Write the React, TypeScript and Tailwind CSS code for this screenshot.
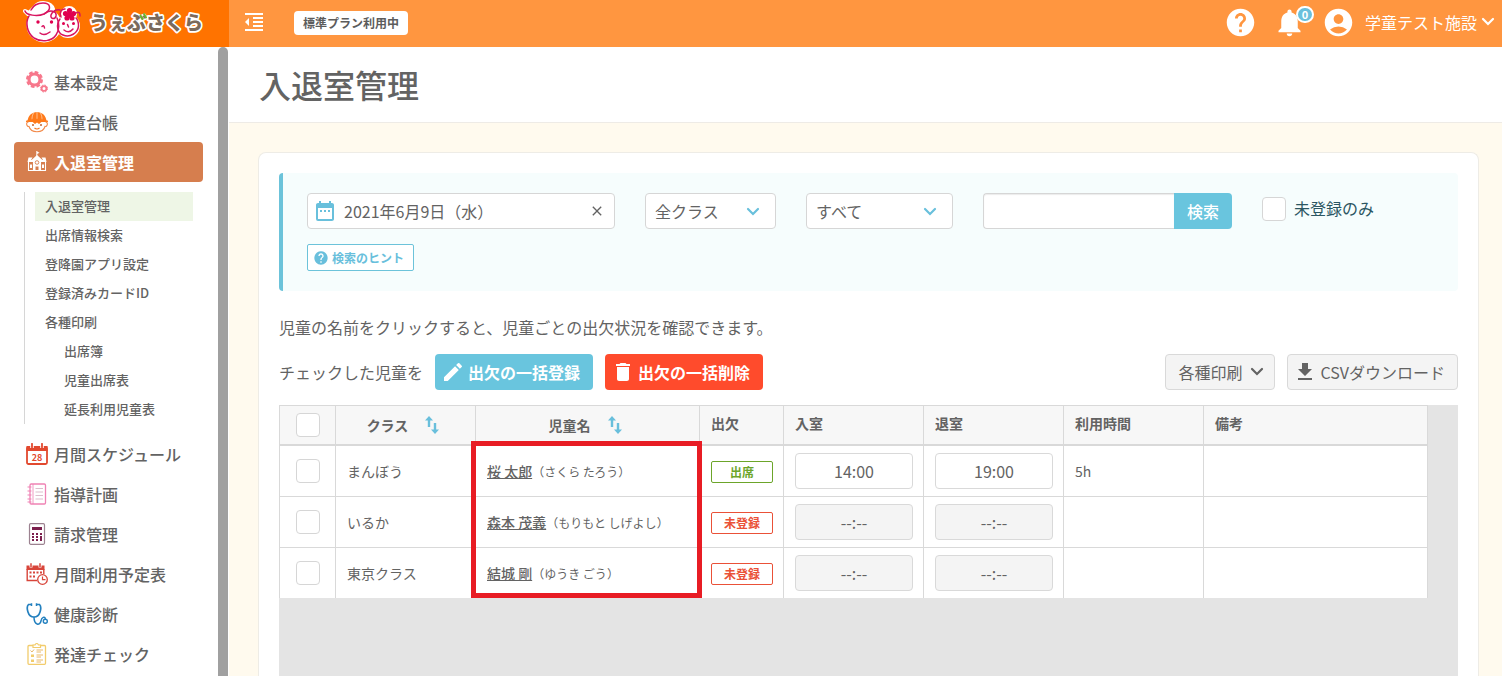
import React from "react";
import {
  MdAccountCircle,
  MdClose,
  MdDateRange,
  MdDelete,
  MdEdit,
  MdFileDownload,
  MdFormatIndentDecrease,
  MdHelp,
  MdNotifications,
} from "react-icons/md";

function Logo() {
  return (
    <svg width="186" height="46" viewBox="0 0 186 46" role="img" aria-label="うぇぶさくら">
      <g fill="#fff" stroke="#fff" strokeWidth="4" strokeLinejoin="round">
        <circle cx="21" cy="25" r="15.5" />
        <circle cx="45" cy="26" r="10" />
        <path d="M2 11 C12 16 24 18 30 9 C28 2 16 1 12 7 L5 14 Z" />
        <circle cx="46" cy="14" r="6" />
      </g>
      <g fill="none" stroke="#d8145f" strokeWidth="1.500" strokeLinecap="round">
        <path d="M6 16 C2 23 4 33 11 38 C19 43 29 41 33 35 C36.500 30 36.500 23 34 18" />
        <path d="M2 11 C3 15 14 17 21 14 C29 10 28 3 20 3 C14 3 10 6 8 10" />
        <path d="M21 14 C27 9 34 11 33 16 C32 20 27 19 28 15 C29 12 33 9 37 10" />
        <path d="M37 19 C33 24 34 33 40 35 C47 38 55 33 55.500 26 C55.500 23 55 20 53 18" />
        <path d="M38 17 C36 13 38 9 42 9" />
        <path d="M53 13 C56 11 57 13 57 16" />
        <path d="M17 33 Q21 36.500 27 32" />
        <path d="M41 30 Q46 34 50 29" />
        <path d="M19 26.500 Q21 24.500 21.500 28" />
        <path d="M44.500 24.500 L45.500 27" />
      </g>
      <g fill="#e0004f">
        <circle cx="15" cy="22" r="1.700" />
        <circle cx="28.500" cy="22" r="1.700" />
        <circle cx="40.500" cy="23.500" r="1.500" />
        <circle cx="50.500" cy="23.500" r="1.500" />
        <circle cx="46.500" cy="10.500" r="2.600" />
        <circle cx="50.500" cy="13.500" r="2.600" />
        <circle cx="49" cy="18" r="2.600" />
        <circle cx="44" cy="18" r="2.600" />
        <circle cx="42.500" cy="13.500" r="2.600" />
        <circle cx="46.500" cy="15" r="3" />
      </g>
      <text
        x="66"
        y="30"
        fontSize="19"
        fontWeight="900"
        fill="#7b6a5c"
        stroke="#fff"
        strokeWidth="3.500"
        strokeLinejoin="round"
        paintOrder="stroke"
      >
        うぇぶさくら
      </text>
      <path
        d="M117.500 15.500 L119.500 19 M121 14 L123 17.500"
        stroke="#6cb32e"
        strokeWidth="2"
        strokeLinecap="round"
      />
    </svg>
  );
}

const iconProps = { width: 22, height: 22, viewBox: "0 0 22 22", fill: "none", "aria-hidden": true } as const;

function GearsIcon() {
  return (
    <svg {...iconProps}>
      <circle cx="8.500" cy="8.500" r="5.500" stroke="#f7788c" strokeWidth="3.200" />
      <circle cx="8.500" cy="8.500" r="7.300" stroke="#f7788c" strokeWidth="2.400" strokeDasharray="3.600 2.130" />
      <circle cx="18" cy="17.500" r="2.400" stroke="#f7788c" strokeWidth="1.800" />
      <circle cx="18" cy="17.500" r="3.500" stroke="#f7788c" strokeWidth="1" strokeDasharray="1.600 1.150" />
    </svg>
  );
}

function ChildIcon() {
  return (
    <svg {...iconProps}>
      <path d="M1.500 11 C1.500 -2.500 20.500 -2.500 20.500 11 Z" fill="#ff7a1a" />
      <path d="M11 1 V8 M7.500 2 C6 5 6 7 6 9 M14.500 2 C16 5 16 7 16 9" stroke="#ffd0a8" strokeWidth=".8" />
      <path d="M0 10.500 Q11 6.500 22 10.500" stroke="#ff7a1a" strokeWidth="1.600" />
      <path
        d="M2.500 11 C-.5 11 .5 16 3 15.500 C5 22.500 17 22.500 19 15.500 C21.500 16 22.500 11 19.500 11"
        stroke="#f28a4a"
        strokeWidth="1.100"
      />
      <path d="M6 10.500 H16 L13 13 L11 11.500 L9 13 Z" fill="#ff7a1a" />
      <circle cx="7" cy="14" r="1" fill="#c2622c" />
      <circle cx="15" cy="14" r="1" fill="#c2622c" />
      <path d="M8.500 17 Q11 19 13.500 17" stroke="#f2701a" strokeWidth="1.200" />
    </svg>
  );
}

function SchoolIcon() {
  return (
    <svg {...iconProps}>
      <path d="M10.800 0 V6" stroke="#fff" strokeWidth="1" />
      <path d="M11 .5 L13.500 1.700 L11 3 Z" fill="#fff" />
      <path d="M11 4 L17 9.500 H5 Z M2.500 6.500 H6.500 L5 9 H17 L15.500 6.500 H19.500 L20.500 11 H1.500 Z" fill="#fff" />
      <path d="M2.500 11 V19.500 H19.500 V11 M7.500 11 V19.500 M14.500 11 V19.500" stroke="#fff" strokeWidth="1.100" />
      <path d="M7.500 9 H14.500 V19.500 H12.500 V15.500 H9.500 V19.500 H7.500 Z" fill="#fff" />
      <circle cx="11" cy="11.500" r="1.800" stroke="#d67e4e" strokeWidth=".9" />
      <path d="M4 13.500 H6 V17 H4 Z M16 13.500 H18 V17 H16 Z" fill="#fff" />
    </svg>
  );
}

function CalendarIcon() {
  return (
    <svg {...iconProps}>
      <rect x="1" y="4" width="20" height="17" rx="1.500" stroke="#e2492f" strokeWidth="1.800" />
      <path d="M.5 3 H21.500 V8 H.5 Z" fill="#e2492f" />
      <path d="M6 0 V5 M16 0 V5" stroke="#fff" strokeWidth="3.600" />
      <path d="M6 .8 V4.500 M16 .8 V4.500" stroke="#e2492f" strokeWidth="1.800" strokeLinecap="round" />
      <text x="11" y="17.500" textAnchor="middle" fontSize="9" fontWeight="700" fill="#e2492f">
        28
      </text>
    </svg>
  );
}

function NotebookIcon() {
  return (
    <svg {...iconProps}>
      <rect x="4" y="1" width="15.500" height="20" rx="1.200" stroke="#ef82b4" strokeWidth="1.300" />
      <path d="M7 1 V21" stroke="#ef82b4" strokeWidth=".8" />
      <path
        d="M1.500 4 H5.500 M1.500 8 H5.500 M1.500 12 H5.500 M1.500 16 H5.500 M1.500 19 H5.500"
        stroke="#ef82b4"
        strokeWidth="1.200"
      />
      <path d="M9.500 5.500 H17 M9.500 9 H17 M9.500 12.500 H17 M9.500 16 H17" stroke="#d9b5c6" strokeWidth=".9" />
    </svg>
  );
}

function CalculatorIcon() {
  return (
    <svg {...iconProps}>
      <rect x="3.500" y=".7" width="15" height="20.600" rx="1.200" stroke="#9c8290" strokeWidth="1.200" />
      <path d="M6 4 H16 V7 H6 Z" fill="#7c1f4d" />
      <path
        d="M6 10 H8 V12 H6 Z M10 10 H12 V12 H10 Z M14 10 H16 V12 H14 Z M6 13 H8 V15 H6 Z M10 13 H12 V15 H10 Z M14 13 H16 V18 H14 Z M6 16 H8 V18 H6 Z M10 16 H12 V18 H10 Z"
        fill="#7c1f4d"
      />
    </svg>
  );
}

function CalendarClockIcon() {
  return (
    <svg {...iconProps}>
      <path d="M.5 2.500 H18.500 V7 H.5 Z" fill="#d8453a" />
      <path d="M1.200 6 V17.500 H11 M17.800 6 V11" stroke="#d8453a" strokeWidth="1.400" />
      <path d="M5 0 V4.500 M14 0 V4.500" stroke="#fff" strokeWidth="3" />
      <path d="M5 .3 V4 M14 .3 V4" stroke="#d8453a" strokeWidth="1.500" />
      <path
        d="M3.500 8.500 H5.500 V10.500 H3.500 Z M7 8.500 H9 V10.500 H7 Z M10.500 8.500 H12.500 V10.500 H10.500 Z M14 8.500 H16 V10.500 H14 Z M3.500 12.500 H5.500 V14.500 H3.500 Z M7 12.500 H9 V14.500 H7 Z"
        fill="#d8453a"
      />
      <circle cx="16.500" cy="16.500" r="4.800" fill="#fff" stroke="#d8453a" strokeWidth="1.300" />
      <path d="M16.500 13.500 V16.700 H19.500" stroke="#d8453a" strokeWidth="1.200" />
    </svg>
  );
}

function StethoscopeIcon() {
  return (
    <svg {...iconProps}>
      <path d="M5 1.500 H2.500 C0 4 1.500 14 8 14 C14.500 14 16 4 13.500 1.500 H11" stroke="#2380bf" strokeWidth="1.700" />
      <path d="M5.500 .3 V3 M10.500 .3 V3" stroke="#2380bf" strokeWidth="1.500" />
      <path d="M8 14 C8 22.500 14 23 15 18 C15.500 14 19 13 19.300 16" stroke="#2380bf" strokeWidth="1.500" />
      <circle cx="19.300" cy="18.300" r="2" stroke="#2380bf" strokeWidth="1.400" />
    </svg>
  );
}

function ChecklistIcon() {
  return (
    <svg {...iconProps}>
      <rect x="2" y="2.500" width="17.500" height="18.800" rx="1" stroke="#f2cc6c" strokeWidth="1.300" />
      <path d="M7 4.500 V2 H9 Q10.700 -1 12.500 2 H14.500 V4.500 Z" fill="#fff" stroke="#f2cc6c" strokeWidth="1.200" />
      <path
        d="M4.500 7.500 L6 9 L8 6.500 M10.500 7 H17 M10.500 9 H15 M10.500 12 H17 M10.500 14 H15 M10.500 17 H17 M10.500 19 H15"
        stroke="#e9b96a"
        strokeWidth="1"
      />
      <path d="M5 11.500 H8 V14 H5 Z M5 16.500 H8 V19 H5 Z" fill="#f2cc6c" />
    </svg>
  );
}

function SortIcon() {
  return (
    <svg width="14" height="20" viewBox="0 0 14 20" fill="none" aria-hidden="true">
      <path d="M4 3 V12" stroke="#69bfdc" strokeWidth="2.400" />
      <path d="M0 5.500 L4 1 L8 5.500 Z" fill="#69bfdc" />
      <path d="M10 8 V17" stroke="#69bfdc" strokeWidth="2.400" />
      <path d="M6 14.500 L10 19 L14 14.500 Z" fill="#69bfdc" />
    </svg>
  );
}

function Chevron({ className = "" }: { className?: string }) {
  return (
    <svg width="14" height="10" viewBox="0 0 14 10" fill="none" aria-hidden="true" className={className}>
      <path d="M2 2 L7 7 L12 2" stroke="currentColor" strokeWidth="2.200" strokeLinecap="round" />
    </svg>
  );
}

const topItems = [
  { label: "基本設定", Icon: GearsIcon },
  { label: "児童台帳", Icon: ChildIcon },
];

const subItems = [
  { label: "入退室管理", active: true },
  { label: "出席情報検索" },
  { label: "登降園アプリ設定" },
  { label: "登録済みカードID" },
  { label: "各種印刷" },
  { label: "出席簿", child: true },
  { label: "児童出席表", child: true },
  { label: "延長利用児童表", child: true },
];

const bottomItems = [
  { label: "月間スケジュール", Icon: CalendarIcon },
  { label: "指導計画", Icon: NotebookIcon },
  { label: "請求管理", Icon: CalculatorIcon },
  { label: "月間利用予定表", Icon: CalendarClockIcon },
  { label: "健康診断", Icon: StethoscopeIcon },
  { label: "発達チェック", Icon: ChecklistIcon },
];

function NavItem({ label, Icon, active = false }: { label: string; Icon: () => React.JSX.Element; active?: boolean }) {
  return (
    <a
      href="#"
      className={
        active
          ? "flex h-10 items-center gap-1.5 rounded-sm bg-[#d67e4e] px-3 font-bold text-white"
          : "flex h-10 items-center gap-1.5 px-3 font-medium"
      }
    >
      <Icon />
      {label}
    </a>
  );
}

function Sidebar() {
  return (
    <aside className="flex w-[229px] shrink-0 bg-white pr-px">
      <nav className="min-w-0 flex-1 overflow-hidden pt-[15px] pr-[15px] pl-3.5">
        {topItems.map((item) => (
          <NavItem key={item.label} {...item} />
        ))}
        <NavItem label="入退室管理" Icon={SchoolIcon} active />
        <ul className="m-2.5 border-l border-[#d6d6d6] pl-2.5 text-[13px] font-medium">
          {subItems.map((item) => (
            <li key={item.label}>
              <a
                href="#"
                className={
                  item.active
                    ? "flex h-[29px] items-center bg-[#eef6e6] pb-0.5 pl-2.5"
                    : item.child
                      ? "flex h-[29px] items-center pb-0.5 pl-[29px]"
                      : "flex h-[29px] items-center pb-0.5 pl-2.5"
                }
              >
                {item.label}
              </a>
            </li>
          ))}
        </ul>
        {bottomItems.map((item) => (
          <NavItem key={item.label} {...item} />
        ))}
      </nav>
      <div className="w-2.5 rounded-t-full bg-[#a0a0a0]" />
    </aside>
  );
}

function Header() {
  return (
    <header className="flex h-[47px] shrink-0 bg-[#ff9640] text-white">
      <a href="#" className="flex w-[229px] shrink-0 items-start bg-[#ff7300] pl-[23px]">
        <Logo />
      </a>
      <div className="flex flex-1 items-center pb-[3px] pl-[13px]">
        <button type="button" aria-label="メニューを閉じる">
          <MdFormatIndentDecrease size={24} />
        </button>
        <span className="mt-0.5 ml-7 flex h-6 items-center rounded-sm bg-white px-[9px] text-xs font-bold text-[#5c5c5c]">
          標準プラン利用中
        </span>
        <div className="ml-auto flex items-center gap-4 pr-[7px]">
          <button type="button" aria-label="ヘルプ">
            <MdHelp size={33} />
          </button>
          <button type="button" aria-label="お知らせ" className="relative">
            <MdNotifications size={33} />
            <span className="absolute top-0 -right-2 flex h-[17px] w-[18px] items-center justify-center rounded-full border-2 border-white bg-[#69c0dc] text-[11px] font-bold">
              0
            </span>
          </button>
          <button type="button" className="flex items-center">
            <MdAccountCircle size={33} />
            <span className="mr-1 ml-2.5">学童テスト施設</span>
            <Chevron />
          </button>
        </div>
      </div>
    </header>
  );
}

function CheckBox({ label, id }: { label: string; id?: string }) {
  return (
    <input
      id={id}
      type="checkbox"
      aria-label={label}
      className="block size-6 shrink-0 appearance-none rounded border border-[#d6d6d6] bg-white checked:bg-[#69c5de]"
    />
  );
}

function FilterSelect({ label, option }: { label: string; option: string }) {
  return (
    <>
      <select
        aria-label={label}
        className="h-9 w-full appearance-none rounded-sm border border-[#d6d6d6] bg-white pl-[9px]"
      >
        <option>{option}</option>
      </select>
      <Chevron className="pointer-events-none absolute top-3.5 right-4 text-[#69c0dc]" />
    </>
  );
}

function Filters() {
  return (
    <section className="rounded border-l-4 border-[#6cc3da] bg-[#f6fdfd] py-5 pr-5 pl-6">
      <div className="flex gap-[30px]">
        <div className="relative w-[308px]">
          <MdDateRange size={24} className="absolute top-1.5 left-1.5 text-[#69c0dc]" />
          <input
            type="text"
            aria-label="日付"
            defaultValue="2021年6月9日（水）"
            className="h-9 w-full rounded-sm border border-[#d6d6d6] bg-white pr-8 pl-9"
          />
          <button type="button" aria-label="日付をクリア" className="absolute top-2.5 right-2.5">
            <MdClose size={16} />
          </button>
        </div>
        <div className="relative w-[131px]">
          <FilterSelect label="クラス" option="全クラス" />
        </div>
        <div className="relative w-[147px]">
          <FilterSelect label="出欠" option="すべて" />
        </div>
        <form className="flex w-[249px]" onSubmit={(e) => e.preventDefault()}>
          <input
            type="text"
            aria-label="検索キーワード"
            className="h-9 min-w-0 flex-1 rounded-l-sm border border-r-0 border-[#d6d6d6] bg-white px-2.5 shadow-[inset_0_1px_1px_rgba(0,0,0,0.08)]"
          />
          <button type="submit" className="h-9 w-[58px] rounded-r-sm bg-[#69c5de] font-medium text-white">
            検索
          </button>
        </form>
        <div className="flex h-8 items-center gap-2">
          <CheckBox id="unregistered" label="未登録のみ" />
          <label htmlFor="unregistered" className="pb-0.5 text-[#2b5662]">
            未登録のみ
          </label>
        </div>
      </div>
      <button
        type="button"
        className="mt-[15px] flex h-[27px] items-center gap-[3px] rounded-xs border border-[#6cc3da] bg-white px-[5px] text-xs font-bold text-[#69bfdc]"
      >
        <MdHelp size={16} />
        <span className="pr-1">検索のヒント</span>
      </button>
    </section>
  );
}

const rows = [
  { cls: "まんぼう", name: "桜 太郎", kana: "さくら たろう", present: true, start: "14:00", end: "19:00", hours: "5h" },
  { cls: "いるか", name: "森本 茂義", kana: "もりもと しげよし", present: false, start: "--:--", end: "--:--", hours: "" },
  { cls: "東京クラス", name: "結城 剛", kana: "ゆうき ごう", present: false, start: "--:--", end: "--:--", hours: "" },
];

function TimeField({ value, label, filled }: { value: string; label: string; filled: boolean }) {
  return (
    <input
      type="text"
      aria-label={label}
      defaultValue={value}
      className={
        filled
          ? "block h-9 w-full rounded border border-[#d9d9d9] bg-white text-center text-base"
          : "block h-9 w-full rounded border border-[#d9d9d9] bg-[#f4f4f4] text-center text-base"
      }
    />
  );
}

const cell = "border-l border-[#d9d9d9] pr-2.5 pl-[11px]";
const plainHead = "border-l border-[#d9d9d9] pr-2.5 pb-1 pl-[11px]";
const sortHead = "border-l border-[#d9d9d9] pr-4 pl-[11px]";

function AttendanceTable() {
  return (
    <div className="relative flex-1 bg-[#e4e4e4]">
      <table className="w-[1149px] table-fixed border-separate border-spacing-0 border-r border-[#d9d9d9] bg-white text-sm">
        <colgroup>
          <col className="w-14" />
          <col className="w-[140px]" />
          <col className="w-56" />
          <col className="w-[84px]" />
          <col className="w-[140px]" />
          <col className="w-[140px]" />
          <col className="w-[140px]" />
          <col className="w-56" />
        </colgroup>
        <thead>
          <tr className="h-[41px] text-left [&>th]:border-t [&>th]:border-b-2 [&>th]:bg-[#f7f7f7]">
            <th className="border-l border-[#d9d9d9] pl-4">
              <CheckBox label="すべて選択" />
            </th>
            <th className={sortHead}>
              <button type="button" className="flex w-full items-center justify-center gap-[17px] font-bold">
                クラス
                <SortIcon />
              </button>
            </th>
            <th className={sortHead}>
              <button type="button" className="flex w-full items-center justify-center gap-[17px] font-bold">
                児童名
                <SortIcon />
              </button>
            </th>
            <th className={plainHead}>出欠</th>
            <th className={plainHead}>入室</th>
            <th className={plainHead}>退室</th>
            <th className={plainHead}>利用時間</th>
            <th className={plainHead}>備考</th>
          </tr>
        </thead>
        <tbody>
          {rows.map((r) => (
            <tr key={r.name} className="h-[51px] last:h-[50px] [&:not(:last-child)>td]:border-b">
              <td className="border-l border-[#d9d9d9] pl-4">
                <CheckBox label={r.name + "を選択"} />
              </td>
              <td className={cell}>{r.cls}</td>
              <td className={cell}>
                <a href="#" className="font-medium underline">
                  {r.name}
                </a>
                <span className="text-xs">（{r.kana}）</span>
              </td>
              <td className={cell}>
                <span
                  className={
                    r.present
                      ? "mt-px flex h-[22px] items-center justify-center rounded-xs border border-[#6ca52a] text-xs font-bold text-[#6ca52a]"
                      : "mt-px flex h-[22px] items-center justify-center rounded-xs border border-[#ea5138] text-xs font-bold text-[#ea5138]"
                  }
                >
                  {r.present ? "出席" : "未登録"}
                </span>
              </td>
              <td className={cell}>
                <TimeField value={r.start} label={r.name + " 入室"} filled={r.present} />
              </td>
              <td className={cell}>
                <TimeField value={r.end} label={r.name + " 退室"} filled={r.present} />
              </td>
              <td className={cell}>{r.hours}</td>
              <td className={cell}></td>
            </tr>
          ))}
        </tbody>
      </table>
      <div className="pointer-events-none absolute top-9 left-48 h-[157px] w-[231px] border-5 border-[#e81c24]" />
    </div>
  );
}

export default function App() {
  return (
    <div className="flex h-screen flex-col overflow-hidden bg-white font-['Noto_Sans_CJK_JP',sans-serif] text-base text-[#636363]">
      <Header />
      <div className="flex min-h-0 flex-1">
        <Sidebar />
        <main className="flex min-w-0 flex-1 flex-col bg-[#fffaee]">
          <div className="flex h-[76px] shrink-0 items-center border-b border-[#eeebe6] bg-white px-[30px] pb-px">
            <h1 className="text-[32px] leading-10 font-medium">入退室管理</h1>
          </div>
          <div className="flex flex-1 flex-col pt-[29px] pr-[23px] pl-[29px]">
            <div className="flex flex-1 flex-col rounded-t-lg border border-b-0 border-[#eeece6] bg-white px-5 pt-5">
              <Filters />
              <p className="mt-6">児童の名前をクリックすると、児童ごとの出欠状況を確認できます。</p>
              <div className="my-[15px] flex items-center gap-3">
                <span>チェックした児童を</span>
                <button
                  type="button"
                  className="flex h-9 items-center gap-[3px] rounded bg-[#69c5de] pr-[13px] pl-1.5 font-bold text-white"
                >
                  <MdEdit size={24} />
                  出欠の一括登録
                </button>
                <button
                  type="button"
                  className="flex h-9 items-center gap-[3px] rounded bg-[#ff4b2c] pr-[13px] pl-1.5 font-bold text-white"
                >
                  <MdDelete size={24} />
                  出欠の一括削除
                </button>
                <button
                  type="button"
                  className="ml-auto flex h-9 items-center gap-2 rounded border border-[#d9d9d9] bg-[#f4f4f4] pr-2.5 pl-3"
                >
                  各種印刷
                  <Chevron />
                </button>
                <button
                  type="button"
                  className="flex h-9 items-center gap-[3px] rounded border border-[#d9d9d9] bg-[#f4f4f4] pr-3 pl-[5px]"
                >
                  <MdFileDownload size={24} />
                  CSVダウンロード
                </button>
              </div>
              <AttendanceTable />
            </div>
          </div>
        </main>
      </div>
    </div>
  );
}
